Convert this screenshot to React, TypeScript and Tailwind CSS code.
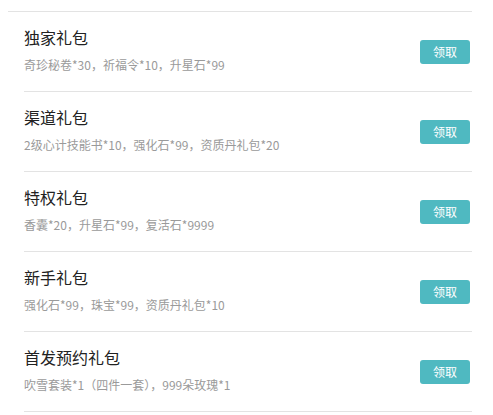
const gifts = [
  { title: '独家礼包', desc: '奇珍秘卷*30，祈福令*10，升星石*99' },
  { title: '渠道礼包', desc: '2级心计技能书*10，强化石*99，资质丹礼包*20' },
  { title: '特权礼包', desc: '香囊*20，升星石*99，复活石*9999' },
  { title: '新手礼包', desc: '强化石*99，珠宝*99，资质丹礼包*10' },
  { title: '首发预约礼包', desc: '吹雪套装*1（四件一套），999朵玫瑰*1' },
];

export default function App() {
  return (
    <div
      className="w-[493px] h-[415px] bg-white pt-[11px]"
      style={{ fontFamily: '"Noto Sans CJK SC", "Noto Sans", sans-serif' }}
    >
      <div className="ml-2 w-[464px] border-t border-[#e3e3e3] pl-4">
        {gifts.map((g) => (
          <div
            key={g.title}
            className="h-[80px] border-b border-[#e3e3e3] flex items-center justify-between"
          >
            <div className="flex flex-col gap-2 pb-[3px]">
              <div className="text-[16px] leading-[22px] text-[#222]">{g.title}</div>
              <div className="text-[12px] leading-[18px] text-[#9a9a9a]">{g.desc}</div>
            </div>
            <button className="w-[50px] h-[24px] mr-[2px] rounded-[3px] bg-[#4fb9c1] text-white text-[12px] leading-none">
              领取
            </button>
          </div>
        ))}
      </div>
    </div>
  );
}
